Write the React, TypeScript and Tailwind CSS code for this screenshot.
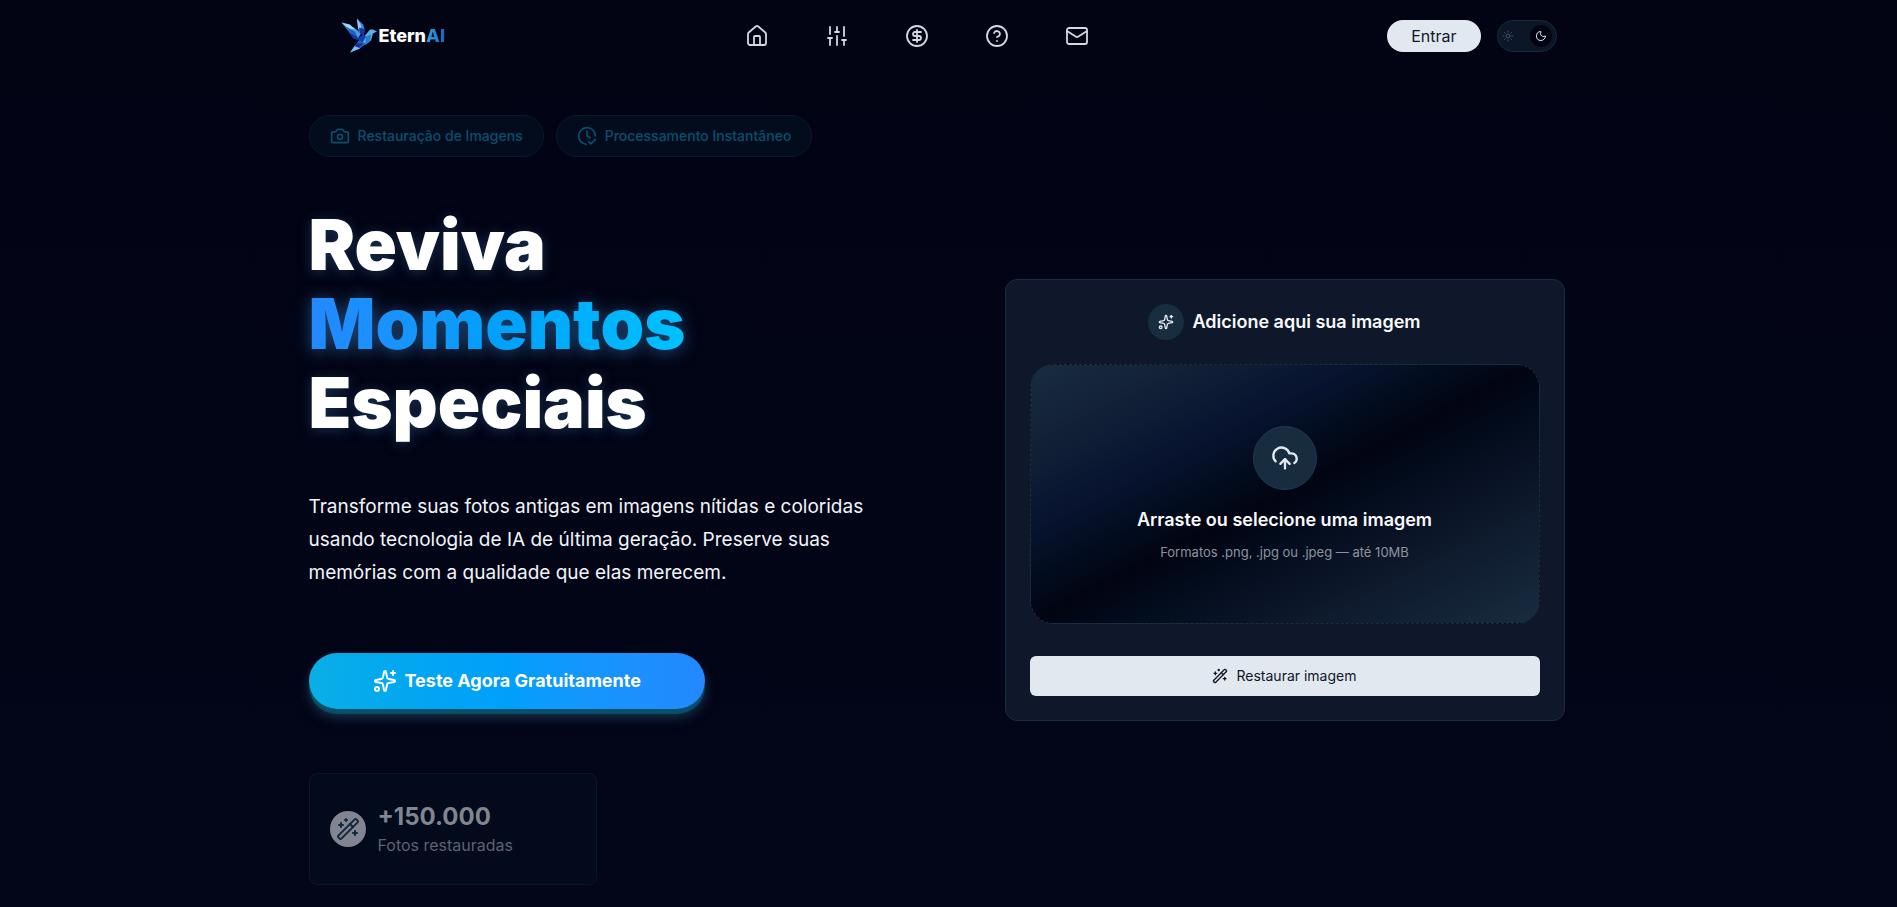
import React from 'react';
import {
  House, SlidersVertical, CircleDollarSign, CircleQuestionMark, Mail, Camera, ClockCheck,
  Sparkles, CloudUpload, WandSparkles, Moon, Sun,
} from 'lucide-react';

function Logo() {
  return (
    <a href="#" className="flex w-[107px] items-center gap-0.5" aria-label="EternAI">
      <svg viewBox="0 0 36 35" className="h-9 w-9 shrink-0" aria-hidden="true">
        <polygon points="0.5,4 13,9 20,15 17,20 10,16" fill="#4a9be6" />
        <polygon points="0.5,4 9,6 14,11 8,10" fill="#9fd4f8" />
        <polygon points="4,8 14,13 17,20 10,16" fill="#1d63c4" />
        <polygon points="8,14 16,18 18,22 12,20" fill="#1434a8" />
        <polygon points="16,0 22,6 24,13 18,14" fill="#3f8fdc" />
        <polygon points="16,0 20,7 20,13 17,10" fill="#93cdf7" />
        <polygon points="18,9 24,11 23,17 19,15" fill="#1434a8" />
        <polygon points="24,17 29,11 32,11 36,13 32,15 30,22 25,26 18,27" fill="#5aaeea" />
        <polygon points="17,20 22,16 25,18 20,27" fill="#1240b0" />
        <polygon points="25,18 30,16 29,23 24,26" fill="#2b7bd0" />
        <polygon points="18,22 25,25 19,30 9,34 14,27" fill="#1d63c4" />
        <polygon points="14,27 19,30 9,34" fill="#7cc0f2" />
        <polygon points="16,25 22,25 18,29 14,28" fill="#0f2f96" />
      </svg>
      <span className="text-lg leading-none font-extrabold text-white">
        Etern<span className="bg-linear-to-r from-[#2fa4ea] to-[#1c62b8] bg-clip-text text-transparent">AI</span>
      </span>
    </a>
  );
}

const links = [
  { label: 'Início', Icon: House },
  { label: 'Recursos', Icon: SlidersVertical },
  { label: 'Preços', Icon: CircleDollarSign },
  { label: 'Dúvidas', Icon: CircleQuestionMark },
  { label: 'Contato', Icon: Mail },
];

function Header() {
  return (
    <header className="mx-auto flex h-[72px] w-full max-w-7xl items-center justify-between px-8">
      <Logo />
      <nav className="flex gap-14">
        {links.map(({ label, Icon }) => (
          <a key={label} href="#" aria-label={label} className="text-[#d3d8e1]">
            <Icon size={24} strokeWidth={1.8} />
          </a>
        ))}
      </nav>
      <div className="flex items-center gap-4">
        <button className="h-8 rounded-full bg-slate-200 px-6 text-base leading-none text-slate-900">Entrar</button>
        <button aria-label="Alternar tema" className="flex h-8 w-[60px] items-center justify-between rounded-full border border-[#15293c] bg-[#0b1627] px-1">
          <Sun size={12} className="text-slate-600" />
          <span className="flex size-[22px] items-center justify-center rounded-full bg-[#020412] text-slate-200">
            <Moon size={12} />
          </span>
        </button>
      </div>
    </header>
  );
}

function Pill({ icon, children }: { icon: React.ReactNode; children: React.ReactNode }) {
  return (
    <div className="flex h-[42px] items-center gap-2 rounded-full border border-[#0a1730] bg-[#030c1d] px-5 text-sm font-medium text-[#07506f]">
      {icon}
      {children}
    </div>
  );
}

function Hero() {
  return (
    <section className="flex flex-col items-start">
      <div className="flex gap-3">
        <Pill icon={<Camera size={20} />}>Restauração de Imagens</Pill>
        <Pill icon={<ClockCheck size={20} />}>Processamento Instantâneo</Pill>
      </div>
      <h1 className="mt-12 text-[70px] leading-[79px] font-black text-white [text-shadow:0_2px_12px_#1e3a5fcc]">
        <span className="block">Reviva</span>
        <span className="block bg-linear-to-r from-[#2388ff] via-[#00a0fb] to-[#00c2ff] bg-clip-text text-transparent [filter:drop-shadow(0_2px_8px_#1e4a78)] [text-shadow:none]">
          Momentos
        </span>
        <span className="block">Especiais</span>
      </h1>
      <p className="mt-12 max-w-xl text-[19px] leading-[33px] text-slate-100">
        Transforme suas fotos antigas em imagens nítidas e coloridas usando tecnologia de IA de última geração. Preserve suas memórias com a qualidade que elas merecem.
      </p>
      <button className="mt-16 flex h-14 items-center gap-2 rounded-full bg-linear-to-r from-[#0aaee6] via-[#019ffb] to-[#2388ff] px-16 text-lg font-bold text-white shadow-[0_5px_1px_#075068,0_8px_12px_#1a3450]">
        <Sparkles size={24} />
        Teste Agora Gratuitamente
      </button>
      <div className="mt-16 flex h-28 w-[288px] items-center gap-3 rounded-lg border border-[#0b1729] bg-[#020a1b] px-5">
        <span className="flex size-9 items-center justify-center rounded-full bg-[#808591] text-[#12283c]">
          <WandSparkles size={24} />
        </span>
        <div>
          <div className="text-2xl leading-8 font-bold text-[#80858f]">+150.000</div>
          <div className="text-base leading-6 text-[#5c6370]">Fotos restauradas</div>
        </div>
      </div>
    </section>
  );
}

function Uploader() {
  return (
    <section className="rounded-xl border border-[#182c40] bg-[#0f172a] p-6">
      <div className="flex items-center justify-center gap-2">
        <span className="flex size-9 items-center justify-center rounded-full bg-[#192d41] text-slate-200">
          <Sparkles size={16} />
        </span>
        <h2 className="text-lg font-semibold text-slate-50">Adicione aqui sua imagem</h2>
      </div>
      <label className="mt-6 flex h-[260px] cursor-pointer flex-col items-center justify-center rounded-3xl border border-dashed border-[#1a2d41] bg-[linear-gradient(to_bottom_right,#182c40_0%,#132238_14%,#07132f_32%,#020b1c_43%,#020412_50%,#020c1d_59%,#0d172a_74%,#182c40_100%)]">
        <input type="file" accept=".png,.jpg,.jpeg" className="sr-only" />
        <span className="flex size-16 items-center justify-center rounded-full border border-[#20384f] bg-[#182c40] text-slate-200">
          <CloudUpload size={28} />
        </span>
        <span className="mt-4 text-lg leading-7 font-semibold text-slate-50">Arraste ou selecione uma imagem</span>
        <span className="mt-2 text-[13px] leading-5 text-[#8d939e]">Formatos .png, .jpg ou .jpeg — até 10MB</span>
      </label>
      <button className="mt-8 flex h-10 w-full items-center justify-center gap-2 rounded-md bg-slate-200 text-sm text-slate-900">
        <WandSparkles size={16} />
        Restaurar imagem
      </button>
    </section>
  );
}

export default function App() {
  return (
    <div className="min-h-screen bg-[#020414] bg-linear-to-b from-[#020414] to-[#020618] font-[Inter,sans-serif]">
      <Header />
      <main className="mx-auto grid w-full max-w-7xl grid-cols-2 items-center gap-16 pt-[43px] pb-[23px]">
        <Hero />
        <div className="px-6">
          <Uploader />
        </div>
      </main>
    </div>
  );
}
